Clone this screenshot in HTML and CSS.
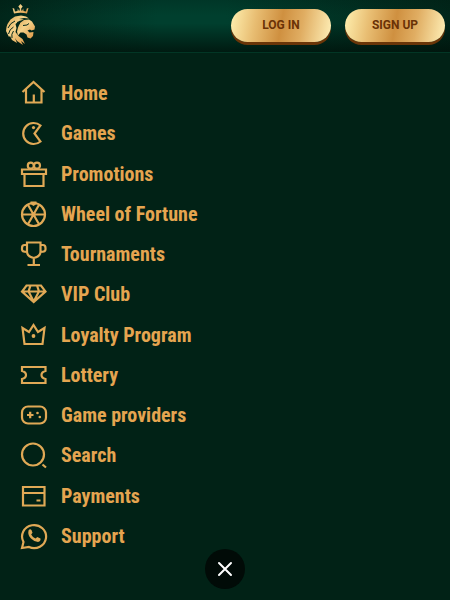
FILE: index.html
```
<!DOCTYPE html>
<html lang="en">

<head>
    <meta charset="UTF-8">
    <meta name="viewport" content="width=device-width, initial-scale=1.0">
    <title>Menu</title>
    <link rel="stylesheet" href="styles.css">
</head>

<body>
    <!-- top bar -->
    <header class="header">
        <a href="#" class="logo" aria-label="Home page">
            <svg width="32" height="42" viewBox="0 0 32 42">
                <defs>
                    <linearGradient id="gold" x1="0" y1="0" x2="1" y2="1">
                        <stop offset="0" stop-color="#dca858" />
                        <stop offset="0.4" stop-color="#f4d28a" />
                        <stop offset="1" stop-color="#dc9440" />
                    </linearGradient>
                </defs>
                <g fill="url(#gold)">
                    <!-- crown -->
                    <path d="M7.500 4l1.500 5.500q6.500-1.500 13 0L23.500 4l-1.700.5-.8 3-2.500-.5-.3-2.500-1 2.300-1-.2v-2l1.500-2L15.500 0l-2.200 2.600 1.500 2v2l-1 .2-1-2.300-.3 2.500-2.500.5-.8-3z" />
                    <!-- mane -->
                    <path d="M2 29l-1-2 .5-4 1-3 3-4.500 4.500-3 6-1 5 1 3 2-5-.5-5 1 5 .5-5 1.500-3.500 3 1 4-1 4 3 4 4 3 2.500 5-4-3 2 4-6-4-2-3 2 5-5-3-2-4-1 1z" />
                    <!-- face -->
                    <path d="M15 19l4-3 5-.5 3 2 3 5-.5 3-3 1-1.500-1-2.500 1 2 2 4-.5-.5 4-2.500 2.500-3-1-1-3-3-2-3 0-2.500 3-1-4 1-4z" />
                </g>
                <g fill="none" stroke="#04271b" stroke-width="1">
                    <path d="M3 24q2-5 7-7M3.500 30q1-5 5-7M7 34q-1-4 1.500-7M18 21.500l4-.5 2-1.500M12 18l3 2" />
                </g>
            </svg>
        </a>
        <div class="actions">
            <button type="button" class="btn">LOG IN</button>
            <button type="button" class="btn">SIGN UP</button>
        </div>
    </header>

    <!-- main menu -->
    <nav class="nav">
        <ul class="menu">
            <li><a href="#" class="item">
                <svg class="icon" viewBox="0 0 28 28"><path d="M2.500 13L13.500 3l11 10M6 10.500V23.500H21.500V10.500M13.800 15.500v8" /></svg>
                Home</a></li>
            <li><a href="#" class="item">
                <svg class="icon" viewBox="0 0 28 28"><path d="M20.500 6.500A10.500 10.500 0 1 0 20.500 22.500L14.500 14.500z" /><circle class="dot" cx="13.500" cy="8.600" r="1.600" /></svg>
                Games</a></li>
            <li><a href="#" class="item">
                <svg class="icon" viewBox="0 0 28 28"><path d="M2 9.500h24v4.500H2zM4.500 14v12h19V14" /><circle cx="10.800" cy="5.700" r="3" /><circle cx="17" cy="5.700" r="3" /></svg>
                Promotions</a></li>
            <li><a href="#" class="item">
                <svg class="icon" viewBox="0 0 28 28"><circle cx="13.500" cy="14.500" r="11.500" /><path d="M2 14.500h23M7.800 4.500l11.400 20M19.200 4.500l-11.400 20" /><path class="dot" d="M10.500 1.500h6v2.500l-3 2-3-2z" /><circle class="dot" cx="13.500" cy="14.500" r="2" /></svg>
                Wheel of Fortune</a></li>
            <li><a href="#" class="item">
                <svg class="icon" viewBox="0 0 28 28"><path d="M7 2.500h13.500v9q0 5-6.700 6.500Q7 16.500 7 11.500zM7 5H4.500Q2 5 2 8v1.500q0 2.500 5 2.500M20.500 5H23q2.500 0 2.500 3v1.500q0 2.500-5 2.500M13.800 18v7M7.500 25h12.500" /></svg>
                Tournaments</a></li>
            <li><a href="#" class="item">
                <svg class="icon" viewBox="0 0 28 28"><path d="M6.500 5.500h14.500L25.500 11.500 13.700 22 2 11.500zM2.500 11.500h23M10.500 5.500L8.500 11.500l5.200 10M17 5.500l2 6-5.300 10" /></svg>
                VIP Club</a></li>
            <li><a href="#" class="item">
                <svg class="icon" viewBox="0 0 28 28"><path d="M2.500 7l6.500 4 4.500-7 4.500 7 6.500-4-2 16h-18z" /><circle class="dot" cx="13.500" cy="15" r="1.900" /></svg>
                Loyalty Program</a></li>
            <li><a href="#" class="item">
                <svg class="icon" viewBox="0 0 28 28"><path d="M2 6h23.500v4q-4 1-4 4t4 4v4H2v-4q4-1 4-4t-4-4z" /></svg>
                Lottery</a></li>
            <li><a href="#" class="item">
                <svg class="icon" viewBox="0 0 28 28"><rect x="2" y="5.500" width="24" height="17" rx="6" /><path d="M7 14h6.500M10.200 10.800v6.500" /><circle class="dot" cx="17.500" cy="12" r="1.300" /><circle class="dot" cx="19.800" cy="16" r="1.300" /></svg>
                Game providers</a></li>
            <li><a href="#" class="item">
                <svg class="icon" viewBox="0 0 28 28"><circle cx="13" cy="13.500" r="11" /><path d="M22.500 23.500l3.500 3" /></svg>
                Search</a></li>
            <li><a href="#" class="item">
                <svg class="icon" viewBox="0 0 28 28"><path d="M3 5h21.500v18.500H3zM3 11h21.500M16.500 18.500h4" /></svg>
                Payments</a></li>
            <li><a href="#" class="item">
                <svg class="icon" viewBox="0 0 28 28"><path d="M2 26l1.500-6A12 11.500 0 1 1 9 25z" /><path class="dot" d="M8.500 8.500q1.500-2 3-.5l1 2.800-1.300 1.700q1.500 3 4.300 4l1.800-1.500 3.200 1.500q.5 2.500-2.500 3.500-3.500 0-7-3.500t-2.500-8z" /></svg>
                Support</a></li>
        </ul>
    </nav>

    <!-- close button floats over the menu -->
    <button type="button" class="close" aria-label="Close menu">
        <svg width="16" height="16" viewBox="0 0 16 16"><path d="M2 2l12 12M14 2L2 14" /></svg>
    </button>
</body>

</html>
```

FILE: styles.css
```
* {
    box-sizing: border-box;
}

body {
    margin: 0;
    min-height: 100vh;
    display: flex;
    flex-direction: column;
    background: #012216;
    font-family: "Roboto Condensed", "Liberation Sans Narrow", Roboto, sans-serif;
}

.header {
    display: flex;
    align-items: center;
    justify-content: space-between;
    height: 53px;
    padding: 0 5px 2px;
    background:
        linear-gradient(rgba(0, 20, 12, 0.2), rgba(0, 20, 12, 0) 30%, rgba(0, 20, 12, 0) 45%, rgba(0, 20, 12, 0.85)),
        linear-gradient(90deg, #01261a, #003f2e 35%, #003f2e 50%, #01261a);
    border-bottom: 1px solid #023625;
}

.logo {
    display: block;
    height: 42px;
}

.actions {
    display: flex;
    gap: 14px;
}

.btn {
    width: 100px;
    height: 33px;
    padding: 0;
    border: none;
    border-radius: 17px;
    background: linear-gradient(100deg, #fff0b0, #e8bd72 25%, #cf9040 50%, #e0ad62 70%, #fff0b8);
    box-shadow: 0 3px 0 #6a3508;
    color: #6a3206;
    font: 700 12px Roboto, sans-serif;
    cursor: pointer;
}

.nav {
    flex: 1;
    display: flex;
    padding: 26px 20px 50px;
}

.menu {
    flex: 1;
    display: flex;
    flex-direction: column;
    justify-content: space-between;
    margin: 0;
    padding: 0;
    list-style: none;
}

.item {
    display: flex;
    align-items: center;
    gap: 13px;
    height: 28px;
    color: #e5a550;
    font-size: 20px;
    font-weight: 700;
    text-decoration: none;
}

.icon {
    width: 28px;
    height: 28px;
    fill: none;
    stroke: #e0a956;
    stroke-width: 2.2;
}

.icon .dot {
    fill: #e0a956;
    stroke: none;
}

.close {
    position: fixed;
    bottom: 11px;
    left: 50%;
    transform: translateX(-50%);
    display: flex;
    align-items: center;
    justify-content: center;
    width: 40px;
    height: 40px;
    padding: 0;
    border: none;
    border-radius: 50%;
    background: #010b07;
    cursor: pointer;
}

.close svg {
    fill: none;
    stroke: #fff;
    stroke-width: 2;
    stroke-linecap: round;
}
```
